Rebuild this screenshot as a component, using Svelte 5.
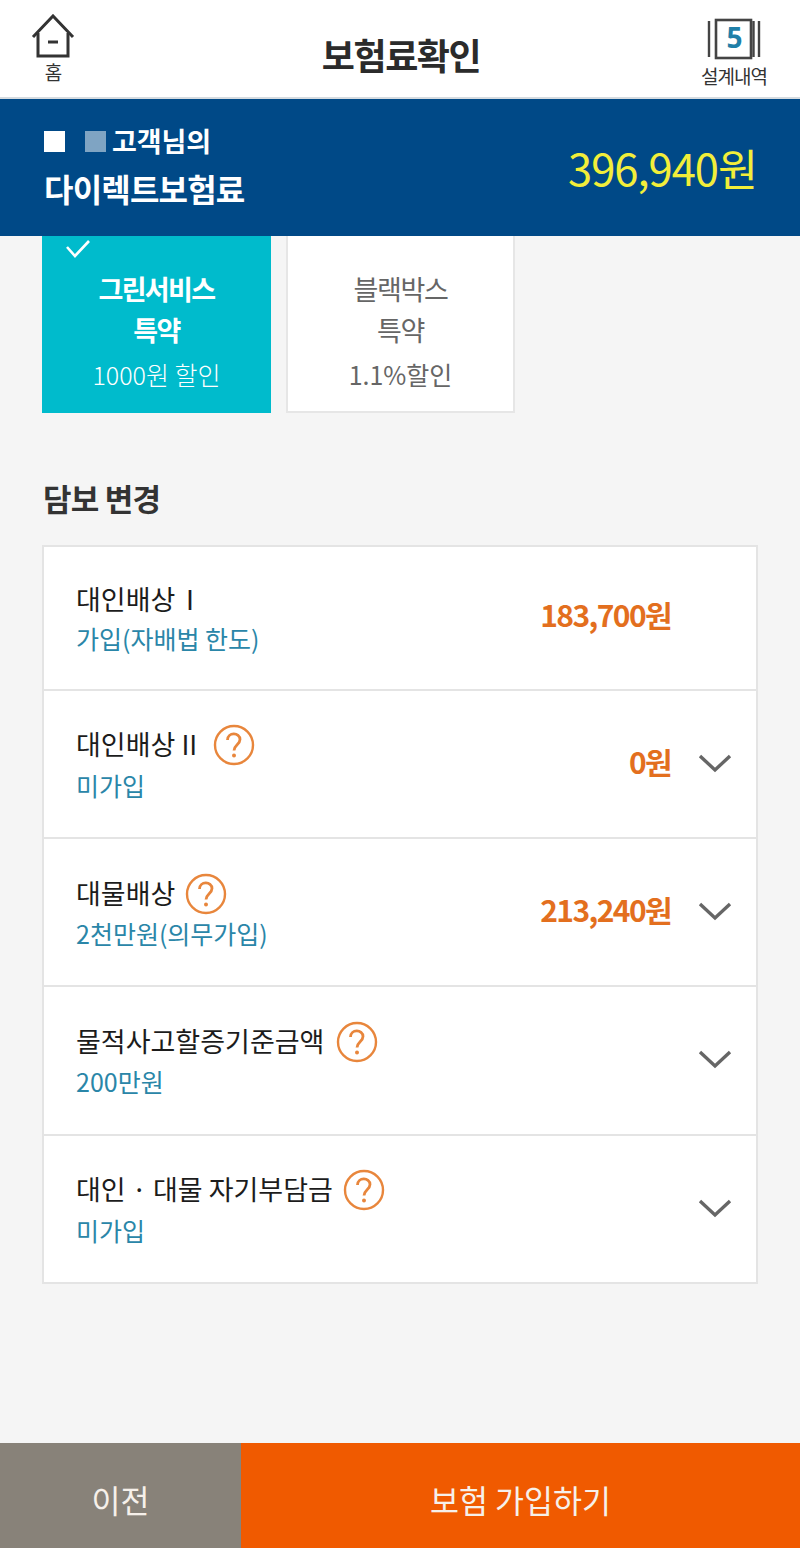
<script>
	const rows = [
		{ name: '대인배상 Ⅰ', sub: '가입(자배법 한도)', price: '183,700원', help: false, open: false, tight: true },
		{ name: '대인배상 II', sub: '미가입', price: '0원', help: true, open: true, wide: true },
		{ name: '대물배상', sub: '2천만원(의무가입)', price: '213,240원', help: true, open: true, near: true },
		{ name: '물적사고할증기준금액', sub: '200만원', price: '', help: true, open: true },
		{ name: '대인 · 대물 자기부담금', sub: '미가입', price: '', help: true, open: true, near: true }
	];
</script>

<div class="page">
	<header class="top">
		<div class="home">
			<svg width="44" height="44" viewBox="0 0 44 44" fill="none" stroke="#333" stroke-width="3">
				<path d="M2 23 L22 2 L42 23" />
				<path d="M7 19 V42 H37 V19" />
				<path d="M17 28 H27" />
			</svg>
			<span>홈</span>
		</div>
		<h1>보험료확인</h1>
		<div class="plan">
			<svg width="54" height="42" viewBox="0 0 54 42" fill="none">
				<path d="M2 3 V39 M52 3 V39 M46.5 3 V39" stroke="#444" stroke-width="2.4" />
				<rect x="9" y="2" width="35" height="38" stroke="#444" stroke-width="2.6" />
				<text x="27" y="30" text-anchor="middle" class="num">5</text>
			</svg>
			<span>설계내역</span>
		</div>
	</header>

	<section class="banner">
		<div>
			<div class="who"><i class="sq white"></i><i class="sq dim"></i>고객님의</div>
			<div class="direct">다이렉트보험료</div>
		</div>
		<div class="total">396,940원</div>
	</section>

	<main>
		<div class="options">
			<div class="opt on">
				<svg class="check" width="26" height="20" viewBox="0 0 26 20" fill="none" stroke="#fff" stroke-width="2.6">
					<path d="M2 8 L10 17 L24 2" />
				</svg>
				<strong>그린서비스<br />특약</strong>
				<small>1000원 할인</small>
			</div>
			<div class="opt">
				<strong>블랙박스<br />특약</strong>
				<small>1.1%할인</small>
			</div>
		</div>

		<h2>담보 변경</h2>

		<ul class="list">
			{#each rows as row, i}
				<li class:first={i === 0}>
					<div class="info">
						<div class="name" class:tight={row.tight}>
							{row.name}
							{#if row.help}
								<svg class:wide={row.wide} class:near={row.near} class="help" width="42" height="42" viewBox="0 0 42 42" fill="none">
									<circle cx="21" cy="21" r="19" stroke="#e8863c" stroke-width="2.4" />
									<path d="M14.5 16 C14.5 8 27 8 27 15.5 C27 20.5 21 21 21 26.5" stroke="#e8863c" stroke-width="2.8" />
									<circle cx="21" cy="31.5" r="2" fill="#e8863c" />
								</svg>
							{/if}
						</div>
						<div class="sub">{row.sub}</div>
					</div>
					{#if row.price}<div class="price">{row.price}</div>{/if}
					<div class="arrow">
						{#if row.open}
							<svg width="34" height="20" viewBox="0 0 34 20" fill="none" stroke="#666" stroke-width="3.4">
								<path d="M2 3 L17 17 L32 3" />
							</svg>
						{/if}
					</div>
				</li>
			{/each}
		</ul>
	</main>

	<footer>
		<button class="prev">이전</button>
		<button class="join">보험 가입하기</button>
	</footer>
</div>

<style>
	:global(body) {
		margin: 0;
		background: #f5f5f5;
	}

	.page {
		width: 800px;
		height: 1548px;
		display: flex;
		flex-direction: column;
		font-family: "Noto Sans CJK KR", "Noto Sans", sans-serif;
		background: #f5f5f5;
		overflow: hidden;
	}

	.top {
		height: 99px;
		flex: none;
		box-sizing: border-box;
		background: #fff;
		border-bottom: 2px solid #d5dbe0;
		display: grid;
		grid-template-columns: 1fr auto 1fr;
		align-items: center;
		padding: 0 33px 0 35px;
	}

	.home, .plan {
		display: flex;
		flex-direction: column;
		align-items: center;
		font-size: 19px;
		line-height: 24px;
		color: #333;
		letter-spacing: -1px;
	}

	.home {
		justify-self: start;
		margin-left: -4px;
		gap: 2px;
	}

	.plan {
		justify-self: end;
		gap: 4px;
		margin-top: 8px;
	}

	h1 {
		margin: 11px 0 0;
		font-size: 36px;
		font-weight: 700;
		letter-spacing: -1.4px;
		color: #2b2b2b;
	}

	.num {
		font-size: 28px;
		font-weight: 700;
		fill: #1f7fa8;
		font-family: "Noto Sans", sans-serif;
	}

	.banner {
		height: 137px;
		flex: none;
		box-sizing: border-box;
		background: #004987;
		color: #fff;
		display: flex;
		align-items: center;
		justify-content: space-between;
		padding: 0 43px 0 44px;
	}

	.who {
		display: flex;
		align-items: center;
		font-size: 27px;
		font-weight: 700;
		line-height: 36px;
		letter-spacing: -0.1px;
	}

	.sq {
		width: 21px;
		height: 21px;
		margin-right: 20px;
		background: #fff;
	}

	.sq.dim {
		margin-right: 6px;
		background: #7fa4c3;
	}

	.direct {
		margin: 7px 0 2px;
		font-size: 32px;
		font-weight: 700;
		line-height: 44px;
		letter-spacing: -0.8px;
	}

	.total {
		font-size: 43.5px;
		line-height: 60px;
		color: #f2ee3a;
		letter-spacing: -1px;
	}

	main {
		flex: 1;
		padding: 0 42px;
	}

	.options {
		display: flex;
		gap: 15px;
	}

	.opt {
		position: relative;
		width: 229px;
		height: 177px;
		box-sizing: border-box;
		background: #fff;
		border: 2px solid #e6e6e6;
		border-top: 0;
		display: flex;
		flex-direction: column;
		align-items: center;
		color: #666;
		padding-top: 32px;
	}

	.opt.on {
		background: #00bbcc;
		border-color: #00bbcc;
		color: #fff;
	}

	.check {
		position: absolute;
		left: 21px;
		top: 3px;
	}

	.opt strong {
		font-size: 27px;
		line-height: 41px;
		font-weight: 400;
		text-align: center;
		letter-spacing: -1.4px;
	}

	.opt.on strong {
		font-weight: 700;
		letter-spacing: -1.6px;
	}

	.opt small {
		margin-top: 6px;
		font-size: 25px;
		line-height: 36px;
		letter-spacing: 0;
	}

	.opt.on small {
		font-weight: 300;
	}

	h2 {
		margin: 63px 0 25px 1px;
		font-size: 31px;
		line-height: 44px;
		font-weight: 700;
		letter-spacing: -0.8px;
		color: #333;
	}

	.list {
		list-style: none;
		margin: 0;
		padding: 0;
		width: 716px;
		box-sizing: border-box;
		background: #fff;
		border: 2px solid #e4e4e4;
	}

	li {
		height: 148.4px;
		box-sizing: border-box;
		display: flex;
		align-items: center;
		padding-left: 32px;
		border-top: 2px solid #e4e4e4;
	}

	li.first {
		height: 141.5px;
		border-top: 0;
	}

	li.first .sub {
		margin-top: -1px;
	}

	li.first .price {
		margin-top: -8px;
	}

	.info {
		flex: 1;
		margin-top: -3px;
	}

	.name {
		display: flex;
		align-items: center;
		gap: 12px;
		height: 44px;
		font-size: 27px;
		color: #1c1c1c;
	}

	.name.tight {
		word-spacing: -5px;
	}

	.help {
		margin-top: 3px;
	}

	.help.wide {
		margin-left: 4px;
	}

	.help.near {
		margin-left: -2px;
	}

	.sub {
		margin-top: 1px;
		font-size: 25px;
		line-height: 36px;
		color: #2a86a8;
	}

	.price {
		margin-top: -6px;
		font-size: 30px;
		font-weight: 700;
		color: #e36f1e;
		letter-spacing: -1.6px;
	}

	.arrow {
		width: 85px;
		display: flex;
		justify-content: center;
		padding-left: 2px;
		margin-top: -2px;
		box-sizing: border-box;
	}

	footer {
		height: 105px;
		display: flex;
		flex: none;
	}

	button {
		border: 0;
		color: #f6f0ea;
		font: inherit;
		font-size: 31.5px;
		padding: 6px 0 0;
	}

	.prev {
		width: 241px;
		background: #888279;
	}

	.join {
		flex: 1;
		background: #f05a00;
	}
</style>
